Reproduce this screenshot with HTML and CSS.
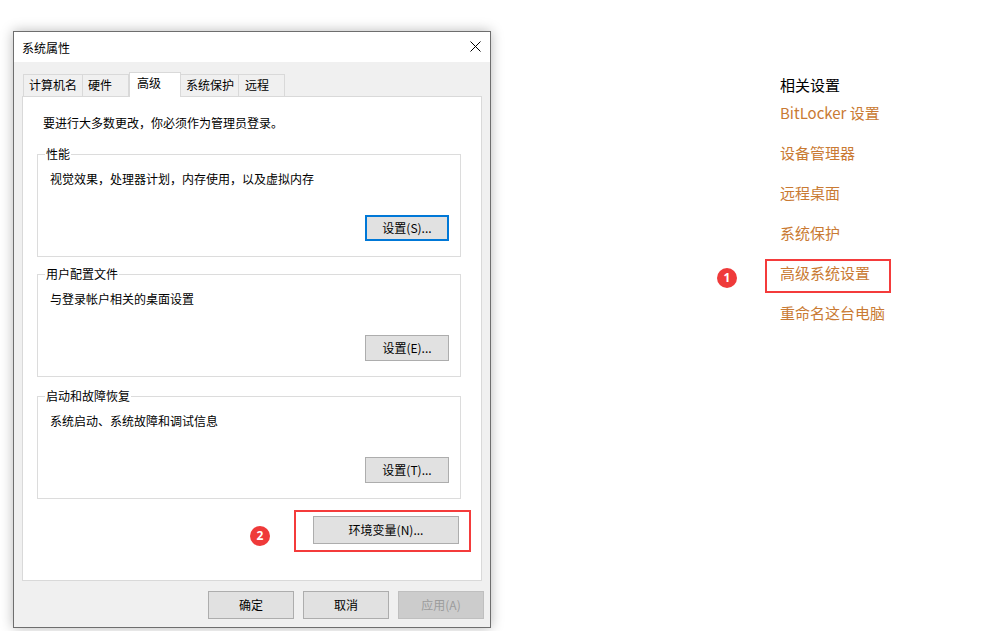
FILE: index.html
```html
<!DOCTYPE html>
<html lang="zh-CN">
<head>
<meta charset="utf-8">
<title>系统属性</title>
<link rel="stylesheet" href="styles.css">
</head>
<body>
<div class="page">
  <div class="dialog">
    <div class="titlebar">
      <span class="title">系统属性</span>
      <svg class="close" width="11" height="11" viewBox="0 0 11 11"><path d="M0.5 0.5L10.5 10.5M10.5 0.5L0.5 10.5" stroke="#000" stroke-width="1" fill="none"/></svg>
    </div>
    <div class="tabs">
      <div class="tab t1">计算机名</div>
      <div class="tab t2">硬件</div>
      <div class="tab t3 active">高级</div>
      <div class="tab t4">系统保护</div>
      <div class="tab t5">远程</div>
    </div>
    <div class="panel">
      <p class="note">要进行大多数更改，你必须作为管理员登录。</p>
      <fieldset class="group g1">
        <legend>性能</legend>
        <div class="group-body">
          <p class="desc">视觉效果，处理器计划，内存使用，以及虚拟内存</p>
          <div class="btn-row"><button class="btn focused">设置(S)...</button></div>
        </div>
      </fieldset>
      <fieldset class="group g2">
        <legend>用户配置文件</legend>
        <div class="group-body">
          <p class="desc">与登录帐户相关的桌面设置</p>
          <div class="btn-row"><button class="btn">设置(E)...</button></div>
        </div>
      </fieldset>
      <fieldset class="group g3">
        <legend>启动和故障恢复</legend>
        <div class="group-body">
          <p class="desc">系统启动、系统故障和调试信息</p>
          <div class="btn-row"><button class="btn">设置(T)...</button></div>
        </div>
      </fieldset>
      <div class="env-row">
        <span class="badge badge-inline">2</span>
        <div class="mark env-mark"><button class="btn env">环境变量(N)...</button></div>
      </div>
    </div>
    <div class="footer">
      <button class="btn foot">确定</button>
      <button class="btn foot">取消</button>
      <button class="btn foot disabled">应用(A)</button>
    </div>
  </div>
  <aside class="related">
    <div class="rel-title">相关设置</div>
    <ul class="rel-list">
      <li class="rel-item"><span class="rel-link">BitLocker 设置</span></li>
      <li class="rel-item"><span class="rel-link">设备管理器</span></li>
      <li class="rel-item"><span class="rel-link">远程桌面</span></li>
      <li class="rel-item"><span class="rel-link">系统保护</span></li>
      <li class="rel-item rel-marked"><span class="rel-link mark link-mark">高级系统设置<span class="badge badge-float">1</span></span></li>
      <li class="rel-item"><span class="rel-link">重命名这台电脑</span></li>
    </ul>
  </aside>
</div>
</body>
</html>
```
FILE: styles.css
```css
* { box-sizing: border-box; }
html, body {
  margin: 0;
  padding: 0;
  background: #ffffff;
  width: 997px;
  height: 631px;
  overflow: hidden;
}
body {
  font-family: "Noto Sans CJK SC", "Noto Sans", sans-serif;
  font-size: 12px;
  color: #000;
}
.page {
  display: flex;
  align-items: flex-start;
  padding: 31px 0 0 13px;
}

/* dialog */
.dialog {
  width: 478px;
  height: 597px;
  border: 1px solid #6e6e6e;
  background: #f0f0f0;
  box-shadow: 0 0 12px rgba(0, 0, 0, 0.28);
  display: flex;
  flex-direction: column;
}
.titlebar {
  height: 30px;
  background: #ffffff;
  display: flex;
  align-items: center;
  justify-content: space-between;
  padding: 0 9px 0 8px;
}
.title {
  font-size: 12px;
  line-height: 16px;
  margin-top: 1px;
}
.close { display: block; margin-top: -2px; }

.tabs {
  display: flex;
  align-items: flex-end;
  height: 24px;
  margin-top: 10px;
  padding-left: 9px;
  position: relative;
  z-index: 1;
}
.tab {
  height: 22px;
  border: 1px solid #d9d9d9;
  border-bottom: none;
  background: #f0f0f0;
  padding: 2px 0 0 5px;
  line-height: 16px;
  text-align: left;
  white-space: nowrap;
}
.t1 { width: 60px; }
.t2 { width: 47px; margin-left: -1px; }
.t3 { width: 52px; margin-left: 0; }
.t4 { width: 59px; margin-left: -1px; }
.t5 { width: 47px; margin-left: -1px; padding-left: 6px; }
.tab.active {
  height: 25px;
  margin-bottom: -1px;
  background: #ffffff;
  padding: 2px 0 0 7px;
}

.panel {
  width: 460px;
  height: 485px;
  margin-left: 8px;
  border: 1px solid #d9d9d9;
  background: #ffffff;
  padding-top: 18px;
}
.note {
  margin: 0 0 0 20px;
  line-height: 16px;
}
.group {
  width: 424px;
  margin: 0 0 0 14px;
  padding: 0;
  min-width: 0;
  border: 1px solid #dcdcdc;
}
.g1 { margin-top: 15px; }
.g2 { margin-top: 9px; }
.g3 { margin-top: 11px; }
.group legend {
  margin-left: 7px;
  padding: 0 1px;
  line-height: 16px;
}
.group-body {
  padding: 9px 11px 15px 12px;
}
.desc {
  margin: 0;
  line-height: 16px;
}
.btn-row {
  display: flex;
  justify-content: flex-end;
  margin-top: 28px;
}
.btn {
  font-family: "Noto Sans CJK SC", "Noto Sans", sans-serif;
  font-size: 12px;
  color: #000;
  background: #e1e1e1;
  border: 1px solid #adadad;
  width: 84px;
  height: 26px;
  padding: 0;
  line-height: 16px;
}
.btn.focused { border: 2px solid #0078d7; }

.env-row {
  display: flex;
  justify-content: flex-end;
  align-items: flex-start;
  margin: 11px 10px 0 0;
}
.mark { border: 2px solid #f43b3b; }
.env-mark { padding: 4px 10px 6px 17px; }
.btn.env { width: 146px; height: 28px; }
.badge {
  width: 20px;
  height: 20px;
  border-radius: 50%;
  background: #ef3a3a;
  color: #fff;
  font-family: "Noto Sans", "Liberation Sans", sans-serif;
  font-weight: 700;
  font-size: 12px;
  line-height: 20px;
  text-align: center;
  display: block;
}
.badge-inline {
  margin: 16px 24px 0 0;
}

.footer {
  display: flex;
  justify-content: flex-end;
  gap: 9px;
  margin-top: 10px;
  padding-right: 6px;
}
.btn.foot { width: 86px; height: 28px; }
.btn.foot.disabled {
  background: #cccccc;
  border-color: #bfbfbf;
  color: #9c9c9c;
}

/* related settings */
.related {
  margin: 44px 0 0 289px;
  font-size: 15px;
}
.rel-title {
  line-height: 20px;
  color: #000;
  margin-bottom: -2px;
}
.rel-list {
  list-style: none;
  margin: 0;
  padding: 0;
}
.rel-item {
  height: 40px;
  display: flex;
  align-items: center;
}
.rel-link {
  color: #c97a33;
  line-height: 20px;
  white-space: nowrap;
}
.rel-item.rel-marked { align-items: flex-end; }
.link-mark {
  position: relative;
  display: block;
  margin-left: -15px;
  padding: 2px 19px 8px 13px;
}
.badge-float {
  position: absolute;
  left: -50px;
  top: 7px;
}
```
